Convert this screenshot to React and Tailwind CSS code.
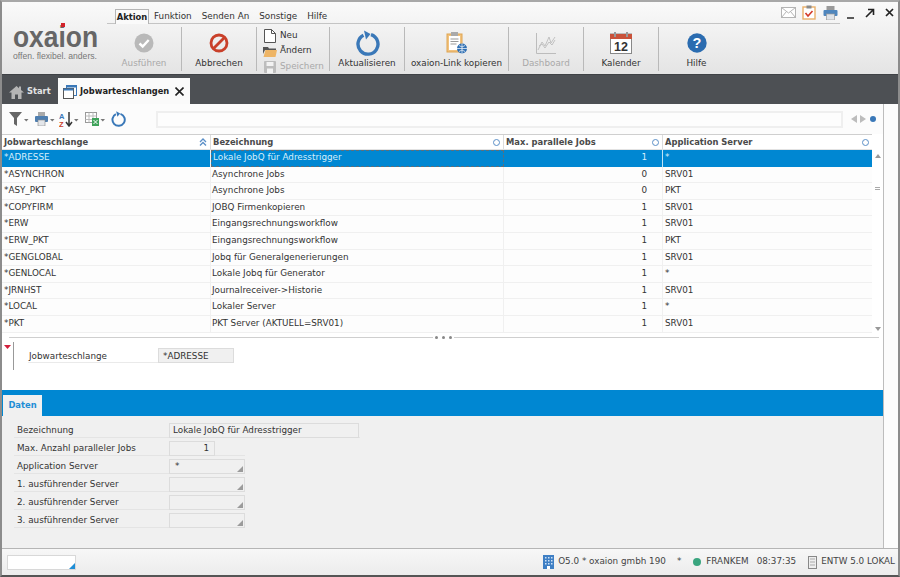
import React from 'react';

const FONT = 'font-["DejaVu_Sans",sans-serif]';

const rows = [
  ['*ADRESSE', 'Lokale JobQ für Adresstrigger', '1', '*'],
  ['*ASYNCHRON', 'Asynchrone Jobs', '0', 'SRV01'],
  ['*ASY_PKT', 'Asynchrone Jobs', '0', 'PKT'],
  ['*COPYFIRM', 'JOBQ Firmenkopieren', '1', 'SRV01'],
  ['*ERW', 'Eingangsrechnungsworkflow', '1', 'SRV01'],
  ['*ERW_PKT', 'Eingangsrechnungsworkflow', '1', 'PKT'],
  ['*GENGLOBAL', 'Jobq für Generalgenerierungen', '1', 'SRV01'],
  ['*GENLOCAL', 'Lokale Jobq für Generator', '1', '*'],
  ['*JRNHST', 'Journalreceiver->Historie', '1', 'SRV01'],
  ['*LOCAL', 'Lokaler Server', '1', '*'],
  ['*PKT', 'PKT Server (AKTUELL=SRV01)', '1', 'SRV01'],
];

const formRows = [
  ['Max. Anzahl paralleler Jobs', '1', 'num'],
  ['Application Server', '*', 'combo'],
  ['1. ausführender Server', '', 'combo'],
  ['2. ausführender Server', '', 'combo'],
  ['3. ausführender Server', '', 'combo'],
];

const RefreshIcon = ({ size = 26, width = 3.4 }) => (
  <svg width={size} height={size} viewBox="0 0 26 26" fill="none">
    <path d="M9.5 5.2A10 10 0 1 0 17 4.6" stroke="#3a78b8" strokeWidth={width} />
    <path d="M11 1l6.5 3.6L13 10z" fill="#3a78b8" transform="translate(-1 -0.5)" />
  </svg>
);

const RibbonButton = ({ w, label, muted, children }) => (
  <div className={`flex flex-col items-center ${w}`}>
    <div className="h-[27px] flex items-center justify-center">{children}</div>
    <div className={`text-[8.8px] leading-[12px] whitespace-nowrap ${muted ? 'text-[#a9a9a9]' : 'text-[#333]'}`}>{label}</div>
  </div>
);

const Sep = () => <div className="w-[1px] h-[44px] bg-[#b9b9b9] shrink-0" />;

const SmallAction = ({ label, muted, children }) => (
  <div className="h-[15.5px] flex items-center gap-[3px]">
    <div className="w-[14px] flex justify-center">{children}</div>
    <span className={`text-[8.8px] ${muted ? 'text-[#a9a9a9]' : 'text-[#333]'}`}>{label}</span>
  </div>
);

const SortDot = () => (
  <span className="w-[7px] h-[7px] rounded-full border-[1.5px] border-[#5b8fc7] bg-white shrink-0" />
);

const Combo = ({ value }) => (
  <div className="relative w-[76px] h-[15px] border border-[#dcdcdc] bg-[#f0f0f0] pl-[5px] text-[8.8px] leading-[12px] text-[#333]">
    {value}
    <svg className="absolute right-[1px] bottom-[1px]" width="6" height="6" viewBox="0 0 6 6"><path d="M6 0v6H0z" fill="#9b9b9b" /></svg>
  </div>
);

export default function App() {
  return (
    <div className={`${FONT} w-[900px] h-[577px] overflow-hidden bg-[#f0f0f0] border-x-2 border-t-2 border-b-2 border-x-[#8c8c8c] border-t-[#a8a8a8] border-b-[#555] flex flex-col text-[#333]`}>
      {/* Ribbon */}
      <div className="h-[72px] shrink-0 bg-gradient-to-b from-[#fafafa] to-[#e4e4e4] flex">
        <div className="w-[105px] shrink-0 pl-[11px] pt-[25px]">
          <div className="relative h-[21px] w-[86px]">
            <div className='font-["Liberation_Sans",sans-serif] font-bold text-[29px] leading-[21px] text-[#666] origin-left scale-x-[0.91] whitespace-nowrap'>oxaion</div>
            <span className="absolute left-[48px] top-[-4px] w-[4px] h-[4px] bg-[#d2232a]" />
          </div>
          <div className='font-["Liberation_Sans",sans-serif] text-[8.6px] leading-[10px] text-[#777] mt-[3px] whitespace-nowrap'>offen. flexibel. anders.</div>
        </div>
        <div className="flex-1 flex flex-col">
          <div className="h-[22px] flex items-end">
            <div className="relative h-[22px] w-[733px] border-b border-[#c4c4c4] flex items-end text-[8.8px] pl-[8px]">
              <div className="h-[15px] -mb-[1px] border border-b-0 border-[#b5b5b5] bg-[#fafafa] w-[34px] text-center font-bold text-[8.4px] text-[#222] leading-[14px]">Aktion</div>
              <div className="flex gap-[10px] pl-[5px] leading-[14px] h-[14px]">
                <span>Funktion</span><span>Senden An</span><span>Sonstige</span><span>Hilfe</span>
              </div>
            </div>
          </div>
          <div className="flex items-center h-[44px] mt-[3px]">
            <RibbonButton w="w-[74px]" label="Ausführen" muted>
              <svg width="20" height="20" viewBox="0 0 20 20"><circle cx="10" cy="10" r="9.5" fill="#b9b9b9" /><path d="M5.5 10.5l3.2 3 6-6.5" fill="none" stroke="#fff" strokeWidth="2.4" /></svg>
            </RibbonButton>
            <Sep />
            <RibbonButton w="w-[74px]" label="Abbrechen">
              <svg width="20" height="20" viewBox="0 0 20 20" fill="none" stroke="#c9402a" strokeWidth="2.8"><circle cx="10" cy="10" r="8" /><path d="M4.5 15.5l11-11" /></svg>
            </RibbonButton>
            <Sep />
            <div className="w-[72px] pl-[6px] pt-[4px] flex flex-col">
              <SmallAction label="Neu">
                <svg width="12" height="14" viewBox="0 0 12 14"><path d="M.5.5h7l4 4v9H.5z" fill="#fff" stroke="#555" /><path d="M7.5.5v4h4" fill="none" stroke="#555" /></svg>
              </SmallAction>
              <SmallAction label="Ändern">
                <svg width="14" height="11" viewBox="0 0 14 11"><path d="M0 1h5l1 1.5h7V4H2L0 8z" fill="#555" /><path d="M0.5 11l2-7H14l-1.5 7z" fill="#eeb566" /></svg>
              </SmallAction>
              <SmallAction label="Speichern" muted>
                <svg width="12" height="12" viewBox="0 0 12 12"><rect width="12" height="12" rx="1" fill="#bdbdbd" /><rect x="2.5" y="1" width="7" height="4" fill="#f2f2f2" /><rect x="3" y="7.5" width="6" height="4.5" fill="#f2f2f2" /></svg>
              </SmallAction>
            </div>
            <Sep />
            <RibbonButton w="w-[74px]" label="Aktualisieren"><RefreshIcon /></RibbonButton>
            <Sep />
            <RibbonButton w="w-[103px]" label="oxaion-Link kopieren">
              <svg width="22" height="24" viewBox="0 0 22 24"><rect x="1" y="3" width="15" height="18" fill="#f1c27e" stroke="#dfa552" /><rect x="3" y="5" width="11" height="14" fill="#fff" /><rect x="5" y="1" width="7" height="4" fill="#aaa" /><path d="M4.5 8h8M4.5 10.5h8M4.5 13h6" stroke="#999" /><circle cx="16" cy="17.5" r="5" fill="#2f6fb3" /><path d="M11 17.5h10M16 12.5v10M13 14.5q3 3 6 0M13 20.5q3-3 6 0" stroke="#fff" strokeWidth=".7" fill="none" /></svg>
            </RibbonButton>
            <Sep />
            <RibbonButton w="w-[74px]" label="Dashboard" muted>
              <svg width="20" height="21" viewBox="0 0 20 21" fill="none" stroke="#bcbcbc"><path d="M.5 0v20.5H20" /><path d="M2 17l4-8 3 4 4-9 2 6 4-6M3 13l3-2 3 4 4-6 3 3 3-5" strokeWidth=".9" /></svg>
            </RibbonButton>
            <Sep />
            <RibbonButton w="w-[74px]" label="Kalender">
              <svg width="22" height="22" viewBox="0 0 22 22"><rect x=".5" y="2" width="21" height="19.5" fill="#fff" stroke="#888" /><rect x="0" y="2" width="22" height="5" fill="#c9523a" /><rect x="4" y="0" width="2" height="5" fill="#999" /><rect x="16" y="0" width="2" height="5" fill="#999" /><text x="11" y="18.5" textAnchor="middle" fontSize="12.5" fontWeight="700" fill="#333" fontFamily="Liberation Sans">12</text></svg>
            </RibbonButton>
            <Sep />
            <RibbonButton w="w-[75px]" label="Hilfe">
              <svg width="20" height="20" viewBox="0 0 20 20"><circle cx="10" cy="10" r="9.7" fill="#2b6cb0" /><text x="10" y="15.2" textAnchor="middle" fontSize="14.5" fontWeight="700" fill="#fff" fontFamily="Liberation Sans">?</text></svg>
            </RibbonButton>
          </div>
        </div>
        {/* window controls sit over the ribbon's top right corner */}
        <div className="absolute top-[5px] right-[6px] flex items-center gap-[6px]">
          <svg width="15" height="11" viewBox="0 0 15 11" fill="none" stroke="#b4b4b4"><rect x=".5" y=".5" width="14" height="10" fill="#fff" /><path d="M.5.5l7 5.5 7-5.5M.5 10.5l5-6M14.5 10.5l-5-6" /></svg>
          <svg width="14" height="15" viewBox="0 0 14 15"><rect x="1" y="2" width="12" height="12" fill="#fff" stroke="#eab06a" strokeWidth="1.4" /><rect x="4.5" y="0.5" width="5" height="3" fill="#8a8a8a" /><path d="M3.5 8l2.5 3 4.5-5" fill="none" stroke="#d23a2a" strokeWidth="1.6" /></svg>
          <svg className="ml-[1px]" width="15" height="14" viewBox="0 0 15 14"><rect x="3.5" y="0" width="8" height="4" fill="#9a9a9a" /><rect x="0.5" y="4" width="14" height="6" rx="1" fill="#4f86bd" /><rect x="3.5" y="8" width="8" height="6" fill="#dfe3e8" stroke="#9a9a9a" strokeWidth=".7" /></svg>
          <svg className="ml-[3px] mt-[3px]" width="8" height="9" viewBox="0 0 8 9"><path d="M0 8h7" stroke="#333" strokeWidth="1.6" /></svg>
          <svg className="ml-[4px]" width="10" height="10" viewBox="0 0 10 10" fill="none" stroke="#222" strokeWidth="1.6"><path d="M1 9l7-7M3 1.5h5.5V7" /></svg>
          <svg className="ml-[4px]" width="9" height="9" viewBox="0 0 9 9" stroke="#222" strokeWidth="1.7"><path d="M1 1l7 7M8 1l-7 7" /></svg>
        </div>
      </div>

      {/* Tab bar */}
      <div className="h-[30px] shrink-0 bg-[#4d5054] border-t border-[#3f4246] flex items-end text-[8.3px] font-bold">
        <div className="h-[26px] w-[56px] flex items-center pl-[7px] pt-[1px] gap-[3px] text-[#e4e4e4]">
          <svg width="15" height="14" viewBox="0 0 15 14"><path d="M7.5 1L0 7.5h2.5V14h3.5V9.5h3V14h3.5V7.5H15L12 5V1.5h-2v1.7z" fill="#b5b5b5" /></svg>
          Start
        </div>
        <div className="h-[26px] w-[132px] bg-[#fafafa] flex items-center pl-[5px] pt-[1px] gap-[3px] text-[#222]">
          <svg width="14" height="14" viewBox="0 0 14 14" fill="none" stroke="#3a78b8"><rect x="3.5" y=".5" width="10" height="10" /><rect x=".5" y="3.5" width="10" height="10" fill="#fff" stroke="#555" /><path d="M.5 4.5h10" stroke="#3a78b8" strokeWidth="2" /><path d="M3.5 1.5h10" strokeWidth="2" /></svg>
          Jobwarteschlangen
          <svg className="ml-[3px]" width="9" height="9" viewBox="0 0 9 9" stroke="#222" strokeWidth="1.6"><path d="M.5.5l8 8M8.5.5l-8 8" /></svg>
        </div>
      </div>

      {/* Main area with white strip at the right */}
      <div className="flex-1 min-h-0 flex">
        <div className="w-[882px] shrink-0 border-r border-[#bdbdbd] flex flex-col">
          <div className="h-[229px] shrink-0 bg-white flex flex-col">
            <div className="h-[30px] shrink-0 flex items-center pl-[7px] bg-[#fcfcfc]">
              <div className="w-[147px] flex items-center gap-[6px] shrink-0">
                <svg width="20" height="14" viewBox="0 0 20 14"><path d="M0 0h13L8 6v8L5 12V6z" fill="#666" /><path d="M15 7h4.5l-2.2 2.5z" fill="#777" /></svg>
                <svg width="20" height="14" viewBox="0 0 20 14"><rect x="3" y="0" width="7" height="4" fill="#aaa" /><rect x="0" y="4" width="13" height="6" rx="1" fill="#4f7fb0" /><rect x="3" y="8" width="7" height="6" fill="#e3e6ea" stroke="#888" strokeWidth=".6" /><path d="M15 7h4.5l-2.2 2.5z" fill="#777" /></svg>
                <svg className="-ml-[2px]" width="20" height="15" viewBox="0 0 20 15"><text x="0" y="6.5" fontSize="7.5" fontWeight="700" fill="#3a78b8" fontFamily="Liberation Sans">A</text><text x="0" y="14.5" fontSize="7.5" fontWeight="700" fill="#c9402a" fontFamily="Liberation Sans">Z</text><path d="M10 0v13M7 10l3 4 3-4" fill="none" stroke="#333" strokeWidth="1.5" /><path d="M15 7h4.5l-2.2 2.5z" fill="#777" /></svg>
                <svg width="20" height="14" viewBox="0 0 20 14"><rect x=".5" y=".5" width="11" height="10" fill="#fff" stroke="#999" /><path d="M.5 4h11M.5 7.5h11M4 .5v10M8 .5v10" stroke="#bbb" /><rect x="7" y="6" width="7" height="8" fill="#3fa35a" /><path d="M8.5 8l4 4M12.5 8l-4 4" stroke="#fff" /><path d="M15.5 7H20l-2.2 2.5z" fill="#777" /></svg>
                <div className="-ml-[1px] flex"><RefreshIcon size={16} width={3.2} /></div>
              </div>
              <div className="w-[687px] h-[17px] border-2 border-[#efefef] bg-[#fdfdfd] shrink-0" />
              <div className="flex items-center gap-[2px] ml-[8px]">
                <svg width="6" height="8" viewBox="0 0 6 8"><path d="M6 0v8L0 4z" fill="#bcbcbc" /></svg>
                <svg className="ml-[1px]" width="6" height="8" viewBox="0 0 6 8"><path d="M0 0v8l6-4z" fill="#bcbcbc" /></svg>
                <span className="ml-[2px] w-[6px] h-[6px] rounded-full bg-[#3a78b8]" />
              </div>
            </div>

            <div className="flex flex-1 min-h-0">
              <div className="w-[870px] shrink-0">
                <div className="h-[16px] border-b border-[#e2e2e2] border-t border-t-[#cfcfcf] flex text-[8.4px] font-bold text-[#4a4a4a] leading-[15px]">
                  <div className="w-[209px] pl-[2px] pr-[3px] flex items-center justify-between border-r border-[#dcdcdc]">
                    Jobwarteschlange
                    <svg width="8" height="8" viewBox="0 0 8 8" fill="none" stroke="#5b8fc7" strokeWidth="1.3"><path d="M1 4l3-3 3 3M1 7.5l3-3 3 3" /></svg>
                  </div>
                  <div className="w-[293px] pl-[2px] pr-[3px] flex items-center justify-between border-r border-[#dcdcdc]">Bezeichnung<SortDot /></div>
                  <div className="w-[159px] pl-[2px] pr-[3px] flex items-center justify-between border-r border-[#dcdcdc]">Max. parallele Jobs<SortDot /></div>
                  <div className="flex-1 pl-[2px] pr-[3px] flex items-center justify-between">Application Server<SortDot /></div>
                </div>
                {rows.map((r, i) => (
                  <div key={r[0]} className={`h-[16.6px] flex text-[8.8px] leading-[14px] ${i === 0 ? 'bg-[#0087d2] text-[#d7eefb]' : 'border-b border-[#f0f0f0] text-[#333] bg-[#fdfdfd]'}`}>
                    <div className="w-[209px] pl-[2px] border-r border-[#f0f0f0] whitespace-nowrap">{r[0]}</div>
                    <div className={`w-[293px] pl-[1px] whitespace-nowrap ${i === 0 ? 'border border-dashed border-[#5e6e7a] leading-[12px]' : 'border-r border-[#f0f0f0]'}`}>{r[1]}</div>
                    <div className={`w-[159px] pr-[15px] text-right border-r ${i === 0 ? 'border-[#bfe3f6]' : 'border-[#f0f0f0]'}`}>{r[2]}</div>
                    <div className="flex-1 pl-[2px]">{r[3]}</div>
                  </div>
                ))}
              </div>
              <div className="flex-1 flex flex-col items-center pt-[20px] pb-[2px] bg-white">
                <svg width="6" height="4" viewBox="0 0 6 4"><path d="M3 0l3 4H0z" fill="#999" /></svg>
                <div className="w-[5px] h-[3px] border-y border-[#aaa] mt-[29px]" />
                <svg className="mt-auto" width="6" height="4" viewBox="0 0 6 4"><path d="M3 4l3-4H0z" fill="#999" /></svg>
              </div>
            </div>
          </div>

          {/* Detail header */}
          <div className="h-[57px] shrink-0 bg-white flex flex-col">
            <div className="flex items-center h-[9px] pl-[7px] pr-[4px]">
              <div className="flex-1 h-[1px] bg-[#cfcfcf]" />
              <div className="flex gap-[4px] px-[2px]">
                <span className="w-[3px] h-[3px] rounded-full bg-[#888]" />
                <span className="w-[3px] h-[3px] rounded-full bg-[#888]" />
                <span className="w-[3px] h-[3px] rounded-full bg-[#888]" />
              </div>
              <div className="w-[425px] h-[1px] bg-[#cfcfcf]" />
            </div>
            <div className="flex">
              <div className="w-[11px] pl-[2px] pt-[3px]">
                <svg width="7" height="4" viewBox="0 0 7 4"><path d="M0 0h7L3.5 4z" fill="#d21f3c" /></svg>
              </div>
              <div className="w-[1px] h-[28px] bg-[#999]" />
              <div className="ml-[14px] mt-[6px] h-[15px] w-[206px] flex border-b border-[#eaeaea]">
                <div className="w-[130px] text-[8.8px] leading-[16px] pl-[1px]">Jobwarteschlange</div>
                <div className="w-[76px] h-[15px] bg-[#f0f0f0] border border-[#dcdcdc] text-[8.8px] leading-[14px] pl-[4px]">*ADRESSE</div>
              </div>
            </div>
          </div>

          {/* Tab band */}
          <div className="h-[26px] shrink-0 bg-[#0087d2] flex items-end pl-[1px]">
            <div className="h-[21px] w-[39px] bg-[#f0f0f0] text-[#1f8ed6] text-[8.4px] font-bold text-center leading-[21px]">Daten</div>
          </div>

          {/* Form */}
          <div className="flex-1 min-h-0 pl-[12px] pt-[7px] flex flex-col gap-[3px]">
            <div className="flex h-[15px] w-[346px] border-b border-[#e4e4e4] items-start">
              <div className="w-[155px] pl-[3px] text-[8.8px] leading-[14px]">Bezeichnung</div>
              <div className="w-[190px] h-[15px] border border-[#dcdcdc] bg-[#f0f0f0] text-[8.8px] leading-[13px] pl-[3px]">Lokale JobQ für Adresstrigger</div>
            </div>
            {formRows.map(([label, value, kind]) => (
              <div key={label} className="flex h-[15px] w-[231px] border-b border-[#e4e4e4] items-start">
                <div className="w-[155px] pl-[3px] text-[8.8px] leading-[14px] whitespace-nowrap">{label}</div>
                {kind === 'num' ? (
                  <div className="w-[46px] h-[15px] border border-[#dcdcdc] text-[8.8px] leading-[13px] text-right pr-[5px]">{value}</div>
                ) : (
                  <Combo value={value} />
                )}
              </div>
            ))}
          </div>
        </div>
        <div className="flex-1 bg-[#fcfcfc]" />
      </div>

      {/* Status bar */}
      <div className="h-[27px] shrink-0 border-t border-[#b5b5b5] bg-gradient-to-b from-[#f7f7f7] to-[#ececec] flex items-center text-[8.8px] text-[#444]">
        <div className="relative ml-[5px] w-[69px] h-[15px] bg-white border border-[#d8d8d8]">
          <svg className="absolute right-0 bottom-0" width="6" height="6" viewBox="0 0 6 6"><path d="M6 0v6H0z" fill="#1f8ed6" /></svg>
        </div>
        <div className="ml-auto flex items-center pr-[3px]">
          <svg width="11" height="14" viewBox="0 0 11 14"><rect width="11" height="14" fill="#3f7fc4" /><path d="M2 2h1.5v1.5H2zM5 2h1.5v1.5H5zM8 2h1.5v1.5H8zM2 5h1.5v1.5H2zM5 5h1.5v1.5H5zM8 5h1.5v1.5H8zM2 8h1.5v1.5H2zM5 8h1.5v1.5H5zM8 8h1.5v1.5H8z" fill="#cfe2f5" /><rect x="4" y="11" width="3" height="3" fill="#fff" /></svg>
          <span className="ml-[4px]">O5.0 * oxaion gmbh 190</span>
          <span className="ml-[11px]">*</span>
          <span className="ml-[12px] w-[8px] h-[8px] rounded-full bg-[#3aa57f]" />
          <span className="ml-[5px]">FRANKEM</span>
          <span className="ml-[8px]">08:37:35</span>
          <svg className="ml-[12px]" width="9" height="13" viewBox="0 0 9 13"><rect x=".5" y=".5" width="8" height="12" fill="#eee" stroke="#888" /><path d="M2 3h5M2 6h5M2 9h5" stroke="#aaa" /></svg>
          <span className="ml-[4px]">ENTW 5.0 LOKAL</span>
        </div>
      </div>
    </div>
  );
}
